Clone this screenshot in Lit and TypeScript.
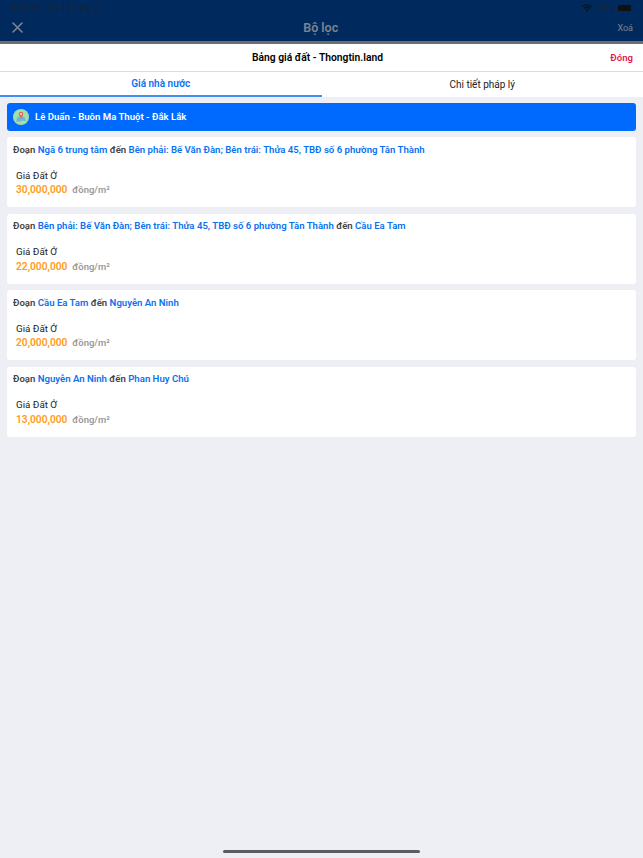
import { LitElement, html, css, svg } from "lit";
import { customElement } from "lit/decorators.js";

const rows: [string, string, string][] = [
  ["Ngã 6 trung tâm", "Bên phải: Bế Văn Đàn; Bên trái: Thửa 45, TBĐ số 6 phường Tân Thành", "30,000,000"],
  ["Bên phải: Bế Văn Đàn; Bên trái: Thửa 45, TBĐ số 6 phường Tân Thành", "Cầu Ea Tam", "22,000,000"],
  ["Cầu Ea Tam", "Nguyễn An Ninh", "20,000,000"],
  ["Nguyễn An Ninh", "Phan Huy Chú", "13,000,000"],
];

@customElement("app-root")
export class AppRoot extends LitElement {
  static styles = css`
    :host { display: block; width: 643px; height: 858px; position: relative; overflow: hidden; background: #eeeff5; font-family: Roboto, "Liberation Sans", sans-serif; color: #1a1a1a; }
    * { box-sizing: border-box; }
    .under { height: 44px; background: #002a5e; display: flex; flex-direction: column; border-bottom: 3px solid #6d6d6d; }
    .status { height: 14px; display: flex; align-items: center; justify-content: space-between; padding: 1px 12px 0 11px; font-size: 8.6px; color: #14243a; }
    .status .l { display: flex; gap: 7px; }
    .status .r { display: flex; align-items: center; gap: 2px; }
    .batt { width: 13px; height: 6px; background: #111; border-radius: 1.5px; margin-left: 1px; }
    .nav { flex: 1; display: flex; align-items: center; justify-content: space-between; padding: 0 10px 0 12px; color: #7d8490; }
    .nav .t { font-size: 12.5px; font-weight: 600; margin-left: 1px; }
    .nav .x { font-size: 9px; }
    .nav svg { display: block; }
    .title { height: 28px; background: #fff; border-bottom: 1px solid #dcdcdc; display: grid; grid-template-columns: 1fr auto 1fr; align-items: center; padding: 0 10px; }
    .title b { grid-column: 2; font-size: 10.3px; font-weight: 600; color: #000; margin-right: 8px; }
    .title span { grid-column: 3; justify-self: end; font-size: 9.6px; font-weight: 600; color: #e8174f; }
    .tabs { height: 25px; background: #fff; display: grid; grid-template-columns: 1fr 1fr; }
    .tab { display: flex; align-items: center; justify-content: center; font-size: 10px; color: #222; padding-bottom: 1px; }
    .tab.on { color: #0a72f0; font-weight: 600; border-bottom: 2px solid #3f8ff2; }
    .content { padding: 6px 7px 0 7px; display: flex; flex-direction: column; gap: 6.6px; }
    .loc { height: 28px; margin-bottom: -.6px; background: #006aff; border-radius: 3px; display: flex; align-items: center; gap: 6px; padding: 0 0 1px 6px; color: #fff; font-size: 9.6px; font-weight: 600; }
    .loc svg { margin-top: 1px; }
    .card { height: 70px; background: #fff; border-radius: 3px; padding: 5.5px 6px 0 6px; }
    .seg { font-size: 9.6px; font-weight: 600; line-height: 13px; color: #444; white-space: nowrap; }
    .seg em { font-style: normal; color: #0a72f0; }
    .lbl { margin: 13px 0 0 3px; font-size: 9.8px; line-height: 13px; color: #222; }
    .price { margin: 1.5px 0 0 3px; line-height: 13px; font-weight: 600; display: flex; align-items: baseline; gap: 5px; }
    .price b { color: #ff9a1a; font-weight: 600; font-size: 10.2px; }
    .price span { color: #9a9a9a; font-size: 9.5px; }
    .home { position: absolute; left: 223px; bottom: 5px; width: 197px; height: 3px; border-radius: 2px; background: #5c5d60; }
  `;

  render() {
    return html`
      <div class="under">
        <div class="status"><span class="l"><span>5:25 CH</span><span>Th 4 26 thg 7</span></span>
          <span class="r">
            <svg width="10" height="8" viewBox="0 0 10 8">${svg`<path d="M5 7.5 3.4 5.8a2.3 2.3 0 0 1 3.2 0zM2.5 4.9l-1-1a5 5 0 0 1 7 0l-1 1a3.6 3.6 0 0 0-5 0zM.7 3.1 0 2.3a7 7 0 0 1 10 0l-.7.8a6 6 0 0 0-8.6 0z" fill="#111"/>`}</svg>
            <span>100%</span><i class="batt"></i>
          </span>
        </div>
        <div class="nav">
          <svg width="11" height="11" viewBox="0 0 11 11">${svg`<path d="M1 1l9 9M10 1l-9 9" stroke="#7d8490" stroke-width="1.6" stroke-linecap="round"/>`}</svg>
          <span class="t">Bộ lọc</span><span class="x">Xoá</span>
        </div>
      </div>
      <div class="title"><b>Bảng giá đất - Thongtin.land</b><span>Đóng</span></div>
      <div class="tabs"><div class="tab on">Giá nhà nước</div><div class="tab">Chi tiết pháp lý</div></div>
      <div class="content">
        <div class="loc">
          <svg width="16" height="16" viewBox="0 0 16 16">${svg`
            <circle cx="8" cy="8" r="8" fill="#a2e0a8"/>
            <path d="M3 12.5 4.6 7.5 6.5 8.3 9.5 7.4 11.5 8 13 12.5 9.8 11.6 6.5 12.4z" fill="#6fb4dc"/>
            <path d="M8 9.2C6.6 7.2 5.8 6.2 5.8 5a2.2 2.2 0 0 1 4.4 0C10.2 6.2 9.4 7.2 8 9.2z" fill="#ee5a4f"/>
            <circle cx="8" cy="5" r=".9" fill="#fff"/>`}</svg>
          <span>Lê Duẩn - Buôn Ma Thuột - Đắk Lắk</span>
        </div>
        ${rows.map(([a, b, p]) => html`
          <div class="card">
            <div class="seg">Đoạn <em>${a}</em> đến <em>${b}</em></div>
            <div class="lbl">Giá Đất Ở</div>
            <div class="price"><b>${p}</b><span>đồng/m²</span></div>
          </div>`)}
      </div>
      <div class="home"></div>
    `;
  }
}
